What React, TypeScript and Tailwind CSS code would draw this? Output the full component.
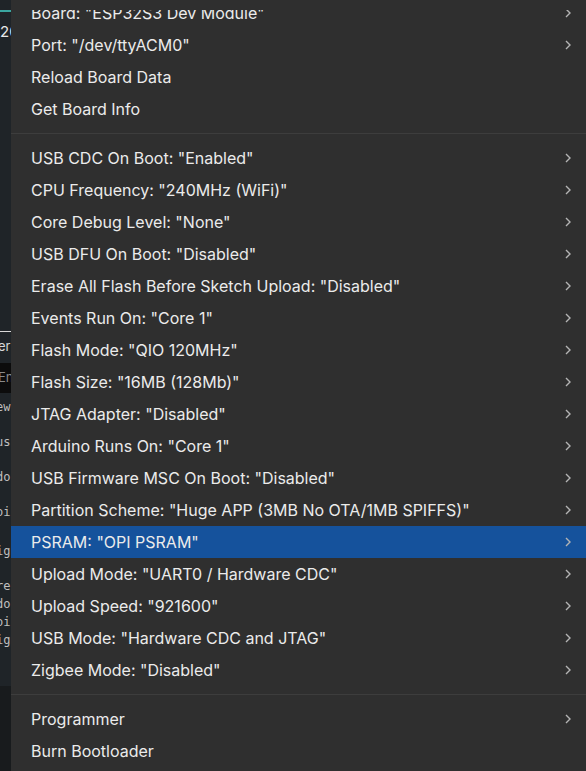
import React from "react";

const groups: string[][] = [
  ['Board: "ESP32S3 Dev Module"', 'Port: "/dev/ttyACM0"', "Reload Board Data", "Get Board Info"],
  [
    'USB CDC On Boot: "Enabled"',
    'CPU Frequency: "240MHz (WiFi)"',
    'Core Debug Level: "None"',
    'USB DFU On Boot: "Disabled"',
    'Erase All Flash Before Sketch Upload: "Disabled"',
    'Events Run On: "Core 1"',
    'Flash Mode: "QIO 120MHz"',
    'Flash Size: "16MB (128Mb)"',
    'JTAG Adapter: "Disabled"',
    'Arduino Runs On: "Core 1"',
    'USB Firmware MSC On Boot: "Disabled"',
    'Partition Scheme: "Huge APP (3MB No OTA/1MB SPIFFS)"',
    'PSRAM: "OPI PSRAM"',
    'Upload Mode: "UART0 / Hardware CDC"',
    'Upload Speed: "921600"',
    'USB Mode: "Hardware CDC and JTAG"',
    'Zigbee Mode: "Disabled"',
  ],
  ["Programmer", "Burn Bootloader"],
];

const noChevron = new Set(["Reload Board Data", "Get Board Info", "Burn Bootloader"]);

function Chevron() {
  return (
    <svg width="8" height="10" viewBox="0 0 8 10" className="shrink-0">
      <path d="M2 1 L6 5 L2 9" fill="none" stroke="#b4b4b4" strokeWidth="1.4" />
    </svg>
  );
}

function Row({ label, first }: { label: string; first?: boolean }) {
  const active = label.startsWith("PSRAM");
  return (
    <div
      className={
        "flex h-[32px] items-center justify-between pl-[20px] pr-[14px] " +
        (active ? "bg-[#15529c] " : "") +
        (first ? "mt-[-13px]" : "")
      }
    >
      <span className="text-[16px] text-[#ebebeb] whitespace-nowrap">{label}</span>
      {!noChevron.has(label) && <Chevron />}
    </div>
  );
}

function Strip() {
  const mono = "font-['DejaVu_Sans_Mono',monospace] text-[12px] text-[#bfbfbf] leading-none whitespace-nowrap ml-[-4px]";
  return (
    <div className="w-[11px] shrink-0 overflow-hidden flex flex-col bg-[#1f2428]">
      <div className="h-[10px]" />
      <div className="h-[2px] bg-[#3aa6a0]" />
      <div className="h-[12px]" />
      <div className="text-[15px] text-[#e8e8e8] leading-none whitespace-nowrap">20</div>
      <div className="h-[290px]" />
      <div className="h-[1px] bg-[#d8d8d8] mt-[2px]" />
      <div className="text-[13px] text-[#d8d8d8] whitespace-nowrap mt-[5px] ml-[-2px]">er</div>
      <div className="h-[30px] bg-[#0c0c0c] mt-[6px] text-[13px] text-[#8a8a8a] whitespace-nowrap ml-[-2px] flex items-center">En</div>
      <div className={mono + " mt-[8px]"}>ew</div>
      <div className={mono + " mt-[23px]"}>us</div>
      <div className={mono + " mt-[23px]"}>do</div>
      <div className={mono + " mt-[23px]"}>oi</div>
      <div className={mono + " mt-[27px]"}>ig</div>
      <div className={mono + " mt-[23px]"}>re</div>
      <div className={mono + " mt-[6px]"}>do</div>
      <div className={mono + " mt-[6px]"}>oi</div>
      <div className={mono + " mt-[6px]"}>ig</div>
      <div className="flex-1 mt-[40px] bg-[#181b1d]" />
    </div>
  );
}

export default function App() {
  return (
    <div className="flex h-[771px] w-[586px] overflow-hidden font-['Inter',sans-serif]">
      <Strip />
      <div className="flex-1 bg-[#2f2f2f] flex flex-col pt-[10px]">
        <div className="flex-1 overflow-hidden flex flex-col">
          {groups.map((g, gi) => (
            <div key={gi}>
              {gi > 0 && (
                <div className="py-[8px]">
                  <div className="h-[1px] bg-[#3d3d3d]" />
                </div>
              )}
              {g.map((l, i) => (
                <Row key={l} label={l} first={gi === 0 && i === 0} />
              ))}
            </div>
          ))}
        </div>
      </div>
    </div>
  );
}
